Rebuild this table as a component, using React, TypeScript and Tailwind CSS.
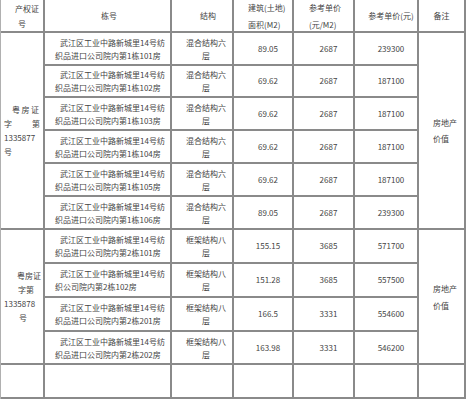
const font = { fontFamily: '"Noto Sans CJK SC", "Noto Sans", sans-serif' };

type Room = {
	line2: string;
	area: string;
	price: string;
	total: string;
};

const groupOne: Room[] = [
	{ line2: "织品进口公司院内第1栋101房", area: "89.05", price: "2687", total: "239300" },
	{ line2: "织品进口公司院内第1栋102房", area: "69.62", price: "2687", total: "187100" },
	{ line2: "织品进口公司院内第1栋103房", area: "69.62", price: "2687", total: "187100" },
	{ line2: "织品进口公司院内第1栋104房", area: "69.62", price: "2687", total: "187100" },
	{ line2: "织品进口公司院内第1栋105房", area: "69.62", price: "2687", total: "187100" },
	{ line2: "织品进口公司院内第1栋106房", area: "89.05", price: "2687", total: "239300" },
];

const groupTwo: Room[] = [
	{ line2: "织品进口公司院内第2栋101房", area: "155.15", price: "3685", total: "571700" },
	{ line2: "织公司院内第2栋102房", area: "151.28", price: "3685", total: "557500" },
	{ line2: "织品进口公司院内第2栋201房", area: "166.5", price: "3331", total: "554600" },
	{ line2: "织品进口公司院内第2栋202房", area: "163.98", price: "3331", total: "546200" },
];

const cell = "border-r-2 border-b-2 border-[#8a8a8a] flex flex-col justify-center whitespace-nowrap";

function RoomCells({ room, structure }: { room: Room; structure: string }) {
	return (
		<>
			<div className={`${cell} leading-[13px]`}>
				<div className="pl-[15px]">武江区工业中路新城里14号纺</div>
				<div className="pl-[10px]">{room.line2}</div>
			</div>
			<div className={`${cell} items-center pl-[8px] leading-[13px]`}>
				<div>{structure}</div>
				<div>层</div>
			</div>
			<div className={`${cell} items-center pl-[10px]`}>{room.area}</div>
			<div className={`${cell} items-center pl-[10px]`}>{room.price}</div>
			<div className={`${cell} items-center pl-[10px]`}>{room.total}</div>
		</>
	);
}

function Remark({ span }: { span: "six" | "four" }) {
	return (
		<div className={`${cell} ${span === "six" ? "row-span-6 leading-[16px]" : "row-span-4 leading-[17px]"} pl-[14px]`}>
			<div>房地产</div>
			<div>价值</div>
		</div>
	);
}

export default function App() {
	return (
		<div className="h-[400px] w-[466px] overflow-hidden bg-white text-[8px] text-[#444]" style={font}>
			<div className="grid grid-cols-[44px_127px_62px_60px_61px_64px_47px] grid-rows-[33px_33px_32px_33px_33px_33px_33px_34px_34px_34px_33px_34px] border-l border-[#b0b0b0]">
				{/* header */}
				<div className={`${cell} leading-[15px]`}>
					<div className="pl-[14px]">产权证</div>
					<div className="pl-[17px]">号</div>
				</div>
				<div className={`${cell} items-center pl-[3px]`}>栋号</div>
				<div className={`${cell} items-center pl-[12px]`}>结构</div>
				<div className={`${cell} pl-[14px] leading-[17px]`}>
					<div>建筑(土地)</div>
					<div>面积(M2)</div>
				</div>
				<div className={`${cell} pl-[15px] leading-[17px]`}>
					<div>参考单价</div>
					<div>(元/M2)</div>
				</div>
				<div className={`${cell} items-center pl-[10px]`}>参考单价(元)</div>
				<div className={`${cell} items-center`}>备注</div>

				{/* group one */}
				<div className={`${cell} row-span-6 leading-[14px]`}>
					<div className="flex justify-between pl-[11px] pr-[4px]">
						<span>粤</span>
						<span>房</span>
						<span>证</span>
					</div>
					<div className="flex justify-between px-[3px]">
						<span>字</span>
						<span>第</span>
					</div>
					<div className="pl-[3px]">1335877</div>
					<div className="pl-[3px]">号</div>
				</div>
				<RoomCells room={groupOne[0]} structure="混合结构六" />
				<Remark span="six" />
				{groupOne.slice(1).map((room) => (
					<RoomCells key={room.line2} room={room} structure="混合结构六" />
				))}

				{/* group two */}
				<div className={`${cell} row-span-4 leading-[14px]`}>
					<div className="pl-[16px]">粤房证</div>
					<div className="pl-[17px]">字第</div>
					<div className="pl-[3px]">1335878</div>
					<div className="pl-[18px]">号</div>
				</div>
				<RoomCells room={groupTwo[0]} structure="框架结构八" />
				<Remark span="four" />
				{groupTwo.slice(1).map((room) => (
					<RoomCells key={room.line2} room={room} structure="框架结构八" />
				))}

				{/* empty last row */}
				<div className={cell} />
				<div className={cell} />
				<div className={cell} />
				<div className={cell} />
				<div className={cell} />
				<div className={cell} />
				<div className={cell} />
			</div>
		</div>
	);
}
